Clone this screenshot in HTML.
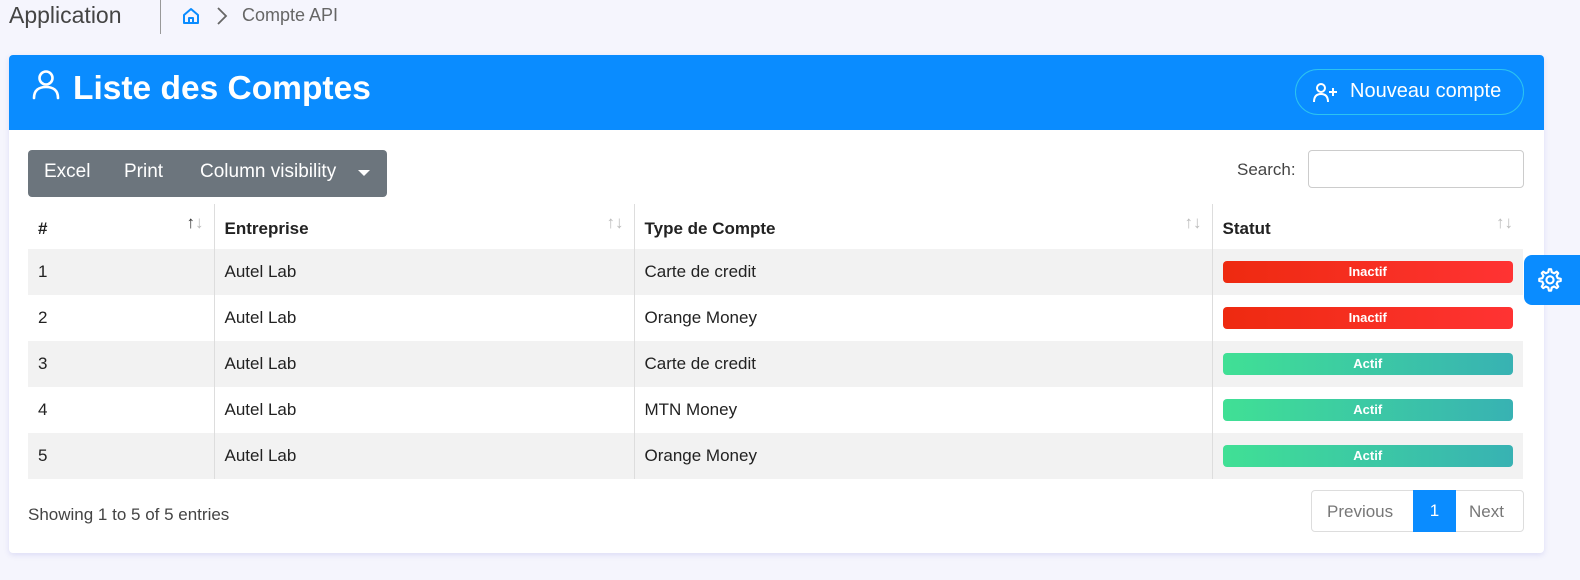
<!DOCTYPE html>
<html><head><meta charset="utf-8"><style>
*{box-sizing:border-box;margin:0;padding:0}
body{width:1580px;height:580px;background:#f5f5fd;font-family:"Liberation Sans",sans-serif;position:relative;overflow:hidden;color:#222}
.abs{position:absolute}
.app{left:9px;top:2px;font-size:23px;color:#444}
.sep{left:160px;top:0;width:1px;height:34px;background:#999}
.bc{left:242px;top:5px;font-size:18px;color:#666}
.card{left:9px;top:55px;width:1535px;height:498px;background:#fff;border-radius:4px;box-shadow:0 2px 6px rgba(90,90,200,.15);overflow:hidden}
.hdr{left:0;top:0;width:1535px;height:75px;background:#0a8cff}
.title{left:64px;top:15px;font-size:33.5px;font-weight:bold;color:#fff}
.nb{left:1286px;top:14px;width:229px;height:46px;border:1px solid #2cc3f0;border-radius:23px;color:#fff;font-size:20px;padding:10px 0 0 54px}
.btns{left:19px;top:95px;width:359px;height:47px;background:#6c757d;border-radius:4px;color:#fff;font-size:19px}
.btns span{position:absolute;top:11px}
.srch{left:1228px;top:105px;font-size:17px;color:#444}
.inp{left:1299px;top:95px;width:216px;height:38px;border:1px solid #ccc;border-radius:4px}
table{position:absolute;left:19px;top:149px;border-collapse:collapse;font-size:17px}
td,th{height:46px;padding:0 10px;text-align:left;border-left:1px solid #ddd}
td:first-child,th:first-child{border-left:none}
th{font-weight:bold;position:relative;height:45px;padding-top:4px}
tbody tr:nth-child(odd){background:#f2f2f2}
th i{position:absolute;right:10px;top:9px;font-style:normal;color:#bbb;font-size:17px}
.b{display:block;height:22px;border-radius:4px;color:#fff;font-weight:bold;font-size:13px;text-align:center;line-height:22px}
.in{background:linear-gradient(90deg,#ee2a10,#ff3333)}
.ac{background:linear-gradient(90deg,#40e095,#38b2b3)}
.show{left:19px;top:450px;font-size:17px;color:#444}
.pg{left:1302px;top:435px;width:213px;height:42px;border:1px solid #ddd;border-radius:4px;font-size:17px;color:#777}
.gear{left:1524px;top:255px;width:56px;height:50px;background:#0a8cff;border-radius:8px 0 0 8px}
</style></head><body>
<div class="abs app">Application</div>
<div class="abs sep"></div>
<svg class="abs" style="left:181px;top:7px" width="20" height="18" viewBox="0 0 20 18"><path d="M3 8 L10 2 L17 8 V16 H3 Z M8 16 V11 H12 V16" fill="none" stroke="#0a8cff" stroke-width="2" stroke-linejoin="round"/></svg>
<svg class="abs" style="left:216px;top:6px" width="12" height="20"><path d="M2 2 L10 10 L2 18" fill="none" stroke="#666" stroke-width="1.8"/></svg>
<div class="abs bc">Compte API</div>
<div class="abs card">
 <div class="abs hdr">
  <svg class="abs" style="left:22px;top:14px" width="30" height="32" viewBox="0 0 30 32"><circle cx="15" cy="9" r="6.5" fill="none" stroke="#fff" stroke-width="2.6"/><path d="M3 29 C3 21 8 18 15 18 C22 18 27 21 27 29" fill="none" stroke="#fff" stroke-width="2.6" stroke-linecap="round"/></svg>
  <div class="abs title">Liste des Comptes</div>
  <div class="abs nb">Nouveau compte</div>
  <svg class="abs" style="left:1303px;top:27px" width="26" height="22" viewBox="0 0 26 22"><circle cx="9" cy="6" r="4" fill="none" stroke="#fff" stroke-width="2"/><path d="M2 20 C2 14 5 12 9 12 C13 12 16 14 16 20" fill="none" stroke="#fff" stroke-width="2"/><path d="M17 10 H25 M21 6 V14" stroke="#fff" stroke-width="2"/></svg>
 </div>
 <div class="abs btns"><span style="left:16px">Excel</span><span style="left:96px">Print</span><span style="left:172px">Column visibility</span><span style="left:330px;top:20px;border:6px solid transparent;border-top-color:#fff;border-bottom:0"></span></div>
 <div class="abs srch">Search:</div>
 <div class="abs inp"></div>
 <table>
 <thead><tr><th style="width:186px">#<i style="color:#333">↑<span style="color:#bbb">↓</span></i></th><th style="width:420px">Entreprise<i>↑↓</i></th><th style="width:578px">Type de Compte<i>↑↓</i></th><th style="width:311px">Statut<i>↑↓</i></th></tr></thead>
 <tbody>
 <tr><td>1</td><td>Autel Lab</td><td>Carte de credit</td><td><span class="b in">Inactif</span></td></tr>
 <tr><td>2</td><td>Autel Lab</td><td>Orange Money</td><td><span class="b in">Inactif</span></td></tr>
 <tr><td>3</td><td>Autel Lab</td><td>Carte de credit</td><td><span class="b ac">Actif</span></td></tr>
 <tr><td>4</td><td>Autel Lab</td><td>MTN Money</td><td><span class="b ac">Actif</span></td></tr>
 <tr><td>5</td><td>Autel Lab</td><td>Orange Money</td><td><span class="b ac">Actif</span></td></tr>
 </tbody></table>
 <div class="abs show">Showing 1 to 5 of 5 entries</div>
 <div class="abs pg"><span class="abs" style="left:15px;top:11px">Previous</span><span class="abs" style="left:101px;top:-1px;width:43px;height:42px;background:#0a8cff;color:#fff;text-align:center;line-height:42px">1</span><span class="abs" style="left:157px;top:11px">Next</span></div>
</div>
<div class="abs gear"><svg style="position:absolute;left:13px;top:12px" width="26" height="26" viewBox="0 0 24 24"><path d="M12 2 L14 2 L14.6 4.8 L16.8 5.8 L19.2 4.3 L20.6 5.7 L19.1 8.1 L20.1 10.3 L22.9 10.9 L22.9 12.9 L20.1 13.5 L19.1 15.7 L20.6 18.1 L19.2 19.5 L16.8 18 L14.6 19 L14 21.8 L12 21.8 L11.4 19 L9.2 18 L6.8 19.5 L5.4 18.1 L6.9 15.7 L5.9 13.5 L3.1 12.9 L3.1 10.9 L5.9 10.3 L6.9 8.1 L5.4 5.7 L6.8 4.3 L9.2 5.8 L11.4 4.8 Z" transform="translate(-1 0)" fill="none" stroke="#fff" stroke-width="2" stroke-linejoin="round"/><circle cx="12" cy="11.9" r="3.3" fill="none" stroke="#fff" stroke-width="2"/></svg></div>
</body></html>
